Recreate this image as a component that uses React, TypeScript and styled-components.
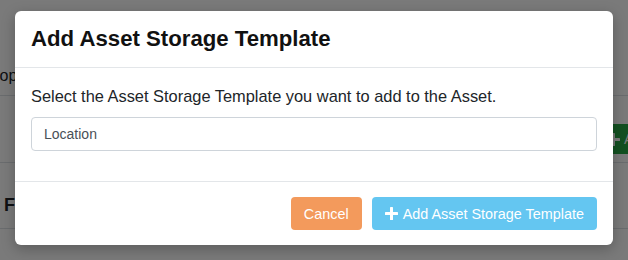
import styled, { createGlobalStyle } from 'styled-components';

const GlobalStyle = createGlobalStyle`
  html, body {
    margin: 0;
    padding: 0;
    background: #ffffff;
  }
  body {
    font-family: "Liberation Sans", Arial, sans-serif;
    color: #212529;
  }
`;

const Page = styled.div`
  position: relative;
  width: 628px;
  height: 260px;
  overflow: hidden;
  background: #ffffff;
`;

const Table = styled.div`
  display: flex;
  flex-direction: column;
`;

const Row = styled.div<{ h: number; align: string; pad?: string }>`
  height: ${({ h }) => h}px;
  border-bottom: 1px solid #dee2e6;
  display: flex;
  align-items: ${({ align }) => align};
  justify-content: space-between;
  padding: ${({ pad }) => pad || '0'};
  box-sizing: border-box;
`;

const CellText = styled.span<{ bold?: boolean; shift: number }>`
  font-size: ${({ bold }) => (bold ? '18px' : '16px')};
  font-weight: ${({ bold }) => (bold ? 700 : 400)};
  margin-left: ${({ shift }) => shift}px;
  color: #212529;
`;

const GreenButton = styled.div`
  width: 150px;
  box-sizing: border-box;
  background: #28a745;
  color: #ffffff;
  font-size: 14px;
  height: 30px;
  padding: 0 9px 0 7px;
  display: flex;
  align-items: center;
  gap: 4px;
  border-radius: 4px;
  margin-right: -122px;
  margin-top: 28px;
  white-space: nowrap;
`;

const Backdrop = styled.div`
  position: absolute;
  inset: 0;
  background: rgba(0, 0, 0, 0.52);
`;

const Modal = styled.div`
  position: absolute;
  left: 15px;
  top: 11px;
  width: 598px;
  background: #ffffff;
  border-radius: 6px;
  box-shadow: 0 4px 14px rgba(0, 0, 0, 0.25);
  display: flex;
  flex-direction: column;
`;

const Header = styled.div`
  padding: 16px;
  border-bottom: 1px solid #e3e6e9;
`;

const Title = styled.h5`
  margin: 0;
  font-size: 22.2px;
  line-height: 24px;
  font-weight: 700;
  color: #111111;
`;

const Body = styled.div`
  padding: 16px 16px 15px;
  border-bottom: 1px solid #e3e6e9;
`;

const Lead = styled.p`
  margin: 0 0 9px;
  font-size: 16.4px;
  line-height: 24px;
  color: #212529;
`;

const Field = styled.div`
  height: 34px;
  box-sizing: border-box;
  border: 1px solid #ced4da;
  border-radius: 4px;
  padding: 0 12px;
  display: flex;
  align-items: center;
  font-size: 14px;
  color: #495057;
  margin-bottom: 15px;
`;

const Footer = styled.div`
  padding: 15px 16px;
  display: flex;
  justify-content: flex-end;
  gap: 10px;
`;

const Button = styled.button<{ tone: 'cancel' | 'add' }>`
  height: 33px;
  border: none;
  border-radius: 4px;
  padding: 0 13px;
  display: flex;
  align-items: center;
  gap: 5px;
  font-family: "Liberation Sans", Arial, sans-serif;
  font-size: 14.4px;
  color: #ffffff;
  background: ${({ tone }) => (tone === 'cancel' ? '#f39a5c' : '#64c6f1')};
`;

const Plus = () => (
  <svg width="13" height="13" viewBox="0 0 13 13" aria-hidden>
    <rect x="5" y="0" width="3" height="13" rx="0.6" fill="#ffffff" />
    <rect x="0" y="5" width="13" height="3" rx="0.6" fill="#ffffff" />
  </svg>
);

export default function App() {
  return (
    <>
      <GlobalStyle />
      <Page>
        <Table>
          <Row h={96} align="flex-end" pad="0 0 10px">
            <CellText shift={-20}>Shop</CellText>
          </Row>
          <Row h={67} align="flex-start">
            <span />
            <GreenButton>
              <Plus /> Add Storage
            </GreenButton>
          </Row>
          <Row h={66} align="center" pad="20px 0 0">
            <CellText bold shift={4}>
              Field
            </CellText>
          </Row>
        </Table>
        <Backdrop />
        <Modal>
          <Header>
            <Title>Add Asset Storage Template</Title>
          </Header>
          <Body>
            <Lead>Select the Asset Storage Template you want to add to the Asset.</Lead>
            <Field>Location</Field>
          </Body>
          <Footer>
            <Button tone="cancel">Cancel</Button>
            <Button tone="add">
              <Plus />
              Add Asset Storage Template
            </Button>
          </Footer>
        </Modal>
      </Page>
    </>
  );
}
